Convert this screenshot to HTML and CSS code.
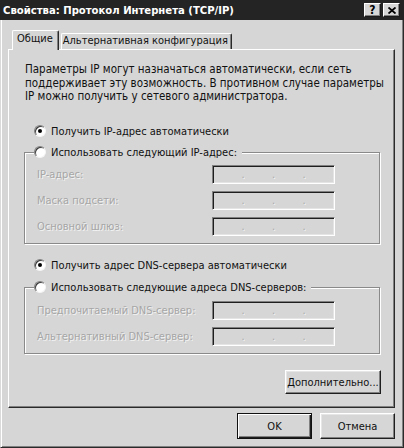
FILE: index.html
```
<!DOCTYPE html>
<html lang="ru">
<head>
<meta charset="utf-8">
<title>Свойства: Протокол Интернета (TCP/IP)</title>
<link rel="stylesheet" href="styles.css">
</head>
<body>
<div class="window">
  <div class="titlebar">
    <span class="title">Свойства: Протокол Интернета (TCP/IP)</span>
    <div class="caption-buttons">
      <span class="cap-btn help">?</span>
      <span class="cap-btn close"><svg width="8" height="7" viewBox="0 0 8 7"><path d="M0.5 0.5 L7.5 6.5 M7.5 0.5 L0.5 6.5" stroke="#000" stroke-width="1.8" fill="none"/></svg></span>
    </div>
  </div>
  <div class="main">
    <div class="tabs">
      <div class="tab active">Общие</div>
      <div class="tab">Альтернативная конфигурация</div>
    </div>
    <div class="panel">
      <p class="intro">Параметры IP могут назначаться автоматически, если сеть<br>поддерживает эту возможность. В противном случае параметры<br>IP можно получить у сетевого администратора.</p>
      <div class="radio-row first"><span class="radio checked"></span>Получить IP-адрес автоматически</div>
      <fieldset class="group group-ip">
        <legend><span class="radio"></span>Использовать следующий IP-адрес:</legend>
        <div class="field-grid">
          <span class="field-label">IP-адрес:</span>
          <span class="ipfield"><span class="seg"></span><span class="dot">.</span><span class="seg"></span><span class="dot">.</span><span class="seg"></span><span class="dot">.</span><span class="seg"></span></span>
          <span class="field-label">Маска подсети:</span>
          <span class="ipfield"><span class="seg"></span><span class="dot">.</span><span class="seg"></span><span class="dot">.</span><span class="seg"></span><span class="dot">.</span><span class="seg"></span></span>
          <span class="field-label">Основной шлюз:</span>
          <span class="ipfield"><span class="seg"></span><span class="dot">.</span><span class="seg"></span><span class="dot">.</span><span class="seg"></span><span class="dot">.</span><span class="seg"></span></span>
        </div>
      </fieldset>
      <div class="radio-row dns"><span class="radio checked"></span>Получить адрес DNS-сервера автоматически</div>
      <fieldset class="group group-dns">
        <legend><span class="radio"></span>Использовать следующие адреса DNS-серверов:</legend>
        <div class="field-grid">
          <span class="field-label">Предпочитаемый DNS-сервер:</span>
          <span class="ipfield"><span class="seg"></span><span class="dot">.</span><span class="seg"></span><span class="dot">.</span><span class="seg"></span><span class="dot">.</span><span class="seg"></span></span>
          <span class="field-label">Альтернативный DNS-сервер:</span>
          <span class="ipfield"><span class="seg"></span><span class="dot">.</span><span class="seg"></span><span class="dot">.</span><span class="seg"></span><span class="dot">.</span><span class="seg"></span></span>
        </div>
      </fieldset>
      <div class="advanced-row"><button class="btn advanced">Дополнительно...</button></div>
    </div>
    <div class="footer">
      <button class="btn default">OK</button>
      <button class="btn">Отмена</button>
    </div>
  </div>
</div>
</body>
</html>
```
FILE: styles.css
```
html, body {
  margin: 0;
  padding: 0;
  background: #d6d6d6;
}

body {
  font-family: "DejaVu Sans Condensed", "DejaVu Sans", sans-serif;
  font-size: 11px;
  color: #111;
}

.window {
  width: 404px;
  height: 448px;
  box-sizing: border-box;
  background: #d6d6d6;
  border-left: 1px solid #dadada;
  border-right: 1px solid #2a2a2a;
  border-bottom: 1px solid #2a2a2a;
  box-shadow: inset 1px 0 0 #fff, inset -1px -1px 0 #808080;
  display: flex;
  flex-direction: column;
}

.titlebar {
  height: 20px;
  margin: 0 -1px;
  background: #242424;
  display: flex;
  align-items: center;
  justify-content: space-between;
  padding: 0 4px 0 3px;
}

.title {
  color: #fff;
  font-weight: bold;
  font-size: 11.2px;
}

.caption-buttons {
  display: flex;
  gap: 2px;
}

.cap-btn {
  width: 17px;
  height: 14px;
  box-sizing: border-box;
  background: #d6d6d6;
  border: 1px solid;
  border-color: #fff #1a1a1a #1a1a1a #fff;
  box-shadow: inset -1px -1px 0 #808080;
  display: flex;
  align-items: center;
  justify-content: center;
  font-weight: bold;
  font-size: 12px;
  line-height: 12px;
  color: #000;
}

.main {
  flex: 1;
  display: flex;
  flex-direction: column;
  padding: 10px 8px 0 7px;
}

.tabs {
  display: flex;
  align-items: flex-end;
  height: 20px;
  padding-left: 4px;
  gap: 2px;
}

.tab {
  height: 16px;
  box-sizing: border-box;
  margin-bottom: 1px;
  border: 1px solid;
  border-color: #fff #2a2a2a transparent #fff;
  border-bottom: none;
  border-radius: 2px 2px 0 0;
  box-shadow: inset -1px 0 0 #808080;
  padding: 0 3px 0 1px;
  line-height: 14px;
  white-space: nowrap;
  background: #d6d6d6;
}

.tab.active {
  position: relative;
  z-index: 1;
  height: 20px;
  margin-bottom: 0;
  padding: 1px 5px 0 4px;
}

.panel {
  flex: 1;
  margin-top: -1px;
  box-sizing: border-box;
  border: 1px solid;
  border-color: #fff #2a2a2a #2a2a2a #fff;
  box-shadow: inset -1px -1px 0 #808080;
  padding: 13px 14px 0 15px;
  display: flex;
  flex-direction: column;
}

.intro {
  margin: 0;
  padding-left: 1px;
  font-size: 11.5px;
  line-height: 13.5px;
  white-space: nowrap;
}

.radio-row {
  display: flex;
  align-items: center;
  height: 16px;
  padding-left: 10px;
  gap: 5px;
}

.radio-row.first {
  margin-top: 19.5px;
}

.radio-row.dns {
  margin-top: 13px;
}

.radio {
  flex: none;
  width: 12px;
  height: 12px;
  box-sizing: border-box;
  border-radius: 50%;
  background: #fff;
  border: 1px solid;
  border-color: #808080 #f4f4f4 #f4f4f4 #808080;
  box-shadow: inset 1px 1px 0 #3a3a3a;
  display: flex;
  align-items: center;
  justify-content: center;
}

.radio.checked::after {
  content: "";
  width: 4px;
  height: 4px;
  border-radius: 50%;
  background: #000;
}

.group {
  margin: 5px 0 0 0;
  padding: 5px 0 7px 12px;
  border: 1px solid #8a8a8a;
  box-shadow: inset 1px 1px 0 #fff, 1px 1px 0 #fff;
  min-width: 0;
}

.group-dns {
  margin-top: 6px;
  padding-top: 6px;
}

.group legend {
  display: flex;
  align-items: center;
  gap: 5px;
  height: 16px;
  margin-left: -3px;
  padding: 0 5px 0 0;
  background: #d6d6d6;
  color: #111;
}

.field-grid {
  display: grid;
  grid-template-columns: 175px 123px;
  grid-auto-rows: 19px;
  row-gap: 7px;
  align-items: center;
}

.field-label {
  color: #a6a6a6;
  text-shadow: 1px 1px 0 #f2f2f2;
  white-space: nowrap;
}

.ipfield {
  height: 19px;
  box-sizing: border-box;
  border: 1px solid;
  border-color: #808080 #fff #fff #808080;
  box-shadow: inset 1px 1px 0 #1e1e1e, inset -1px -1px 0 #e4e4e4;
  display: flex;
  align-items: flex-end;
  padding: 0 1px 3px 1px;
}

.seg {
  flex: 1;
}

.dot {
  width: 3px;
  text-align: center;
  color: #aaaaaa;
  text-shadow: 1px 1px 0 #f4f4f4;
  font-size: 11px;
  line-height: 11px;
}

.advanced-row {
  display: flex;
  justify-content: flex-end;
  margin-top: 16px;
  margin-right: -1px;
}

.btn {
  font-family: "DejaVu Sans Condensed", "DejaVu Sans", sans-serif;
  font-size: 11px;
  color: #111;
  background: #d6d6d6;
  box-sizing: border-box;
  border: 1px solid;
  border-color: #fff #1e1e1e #1e1e1e #fff;
  box-shadow: inset -1px -1px 0 #808080, inset 1px 1px 0 #e6e6e6;
  padding: 0;
  margin: 0;
  width: 75px;
  height: 26px;
}

.btn.advanced {
  width: 96px;
  height: 24px;
}

.btn.default {
  border: 1px solid #111;
  box-shadow: inset 1px 1px 0 #fff, inset -1px -1px 0 #1e1e1e, inset -2px -2px 0 #808080;
}

.footer {
  display: flex;
  justify-content: flex-end;
  gap: 8px;
  margin-top: 5px;
  padding-bottom: 8px;
}
```
